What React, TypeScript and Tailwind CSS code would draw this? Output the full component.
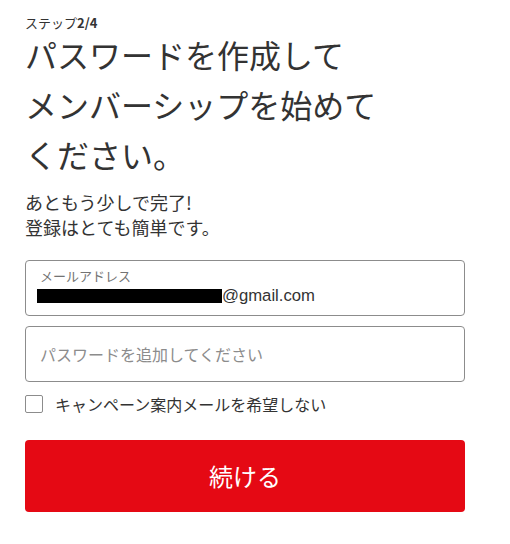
import React from "react";

export default function App() {
  const font = { fontFamily: '"Noto Sans CJK JP", "Noto Sans", sans-serif' };
  return (
    <div className="w-[510px] h-[544px] bg-white text-[#333]" style={font}>
      <div className="pl-[25px] pt-[13px] w-[465px]">
        <div className="text-[13px] leading-[20px]">
          ステップ<b className="font-bold">2/4</b>
        </div>
        <h1 className="text-[32px] leading-[50px] font-normal mt-[-4px]">
          パスワードを作成して
          <br />
          メンバーシップを始めて
          <br />
          ください。
        </h1>
        <div className="mt-[11px] text-[18px] leading-[25px]">
          <div>あともう少しで完了!</div>
          <div>登録はとても簡単です。</div>
        </div>
        <div className="mt-[20px] h-[56px] border border-[#8c8c8c] rounded-[4px] px-[11px] pt-[6px]">
          <div className="text-[13px] leading-[18px] text-[#737373] ml-[3px]">メールアドレス</div>
          <div className="flex items-center text-[16.7px] leading-[22px] text-[#333]" style={{ fontFamily: '"Liberation Sans", Arial, sans-serif' }}>
            <span className="inline-block w-[185px] h-[14px] bg-black"></span>
            <span>@gmail.com</span>
          </div>
        </div>
        <div className="mt-[10px] h-[56px] border border-[#8c8c8c] rounded-[4px] px-[14px] flex items-center">
          <span className="text-[16px] text-[#8c8c8c]">パスワードを追加してください</span>
        </div>
        <div className="mt-[12px] flex items-center">
          <span className="w-[18px] h-[18px] border border-[#8c8c8c] rounded-[2px]"></span>
          <span className="ml-[12px] text-[16px] leading-[20px]">キャンペーン案内メールを希望しない</span>
        </div>
        <button className="mt-[26px] w-full h-[72px] bg-[#e50914] rounded-[4px] text-white text-[24px]">
          続ける
        </button>
      </div>
    </div>
  );
}
